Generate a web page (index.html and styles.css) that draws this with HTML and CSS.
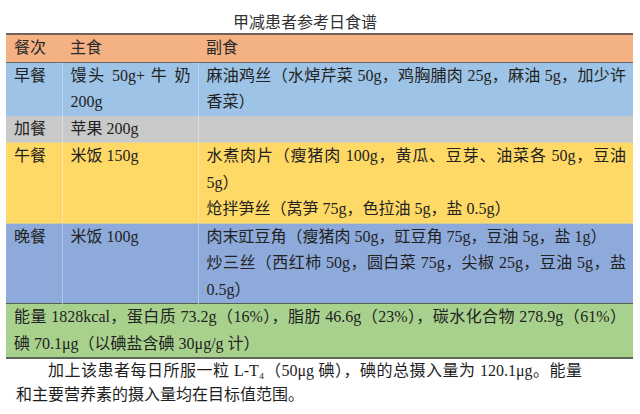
FILE: index.html
```html
<!DOCTYPE html>
<html lang="zh-CN">
<head>
<meta charset="utf-8">
<title>甲减患者参考日食谱</title>
<link rel="stylesheet" href="styles.css">
</head>
<body>
<div class="page">
  <div class="title">甲减患者参考日食谱</div>
  <table class="menu">
    <colgroup>
      <col class="c1"><col class="c2"><col class="c3">
    </colgroup>
    <tr class="head">
      <td>餐次</td><td>主食</td><td>副食</td>
    </tr>
    <tr class="breakfast">
      <td>早餐</td>
      <td class="sep">馒头 50g+ 牛 奶 200g</td>
      <td class="sep">麻油鸡丝（水焯芹菜 50g，鸡胸脯肉 25g，麻油 5g，加少许香菜）</td>
    </tr>
    <tr class="snack">
      <td>加餐</td>
      <td class="sep">苹果 200g</td>
      <td class="sep"></td>
    </tr>
    <tr class="lunch">
      <td>午餐</td>
      <td class="sep">米饭 150g</td>
      <td class="sep">
        <div>水煮肉片（瘦猪肉 100g，黄瓜、豆芽、油菜各 50g，豆油 5g）</div>
        <div>炝拌笋丝（莴笋 75g，色拉油 5g，盐 0.5g）</div>
      </td>
    </tr>
    <tr class="dinner">
      <td>晚餐</td>
      <td class="sep">米饭 100g</td>
      <td class="sep">
        <div>肉末豇豆角（瘦猪肉 50g，豇豆角 75g，豆油 5g，盐 1g）</div>
        <div>炒三丝（西红柿 50g，圆白菜 75g，尖椒 25g，豆油 5g，盐 0.5g）</div>
      </td>
    </tr>
    <tr class="total">
      <td colspan="3">
        <div class="full">能量 1828kcal，蛋白质 73.2g（16%），脂肪 46.6g（23%），碳水化合物 278.9g（61%）</div>
        <div>碘 70.1μg（以碘盐含碘 30μg/g 计）</div>
      </td>
    </tr>
  </table>
  <p class="note">加上该患者每日所服一粒 L-T₄（50μg 碘），碘的总摄入量为 120.1μg。能量和主要营养素的摄入量均在目标值范围。</p>
</div>
</body>
</html>
```
FILE: styles.css
```css
html, body {
  margin: 0;
  padding: 0;
  background: #ffffff;
}

body {
  font-family: "Liberation Serif", "Noto Sans CJK SC", serif;
  font-size: 16px;
  color: #222222;
}

.page {
  padding: 9px 7px 0 6px;
  width: 627px;
}

.title {
  font-family: "Noto Sans CJK SC", sans-serif;
  font-size: 16px;
  line-height: 24px;
  color: #333333;
  text-align: center;
  padding-right: 29px;
}

.menu {
  width: 627px;
  border-collapse: collapse;
  table-layout: fixed;
  border-top: 2px solid #6e625a;
  border-bottom: 2px solid #5e6458;
}

.c1 { width: 56px; }
.c2 { width: 136px; }
.c3 { width: 435px; }

.menu td {
  padding: 0 7px 0 8px;
  line-height: 26.5px;
  vertical-align: top;
  text-align: justify;
}

.menu td.sep {
  border-left: 1px solid rgba(255, 255, 255, 0.35);
}

.head td {
  background: #f4b183;
  border-bottom: 1px solid #6b6b6b;
  color: #2a2a2a;
}

.breakfast td { background: #9dc3e6; }
.snack td { background: #c9c9c9; }
.lunch td { background: #ffd966; border-top: 1px solid #d9d2b5; }
.dinner td { background: #8eaadb; border-top: 1px solid #d0c9a4; }

.total td {
  background: #a9d18e;
  border-top: 1px solid #55604f;
  line-height: 26.5px;
}

.full {
  white-space: nowrap;
  text-align: justify;
  text-align-last: justify;
}

.note {
  margin: 0 0 0 10px;
  width: 566px;
  text-indent: 32px;
  line-height: 23.5px;
  text-align: justify;
  color: #1e1e1e;
}
```
